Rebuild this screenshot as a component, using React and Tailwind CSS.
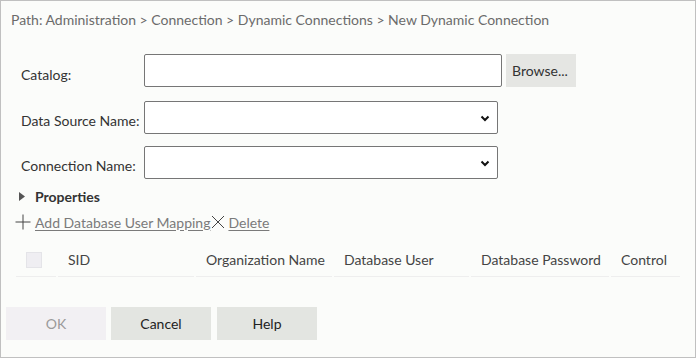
import React from "react";

const columns = [
  { title: "SID", width: "w-[136px]" },
  { title: "Organization Name", width: "w-[136px]" },
  { title: "Database User", width: "w-[135px]" },
  { title: "Database Password", width: "w-[138px]" },
  { title: "Control", width: "w-[69px]" },
];

const Chevron = () => (
  <svg width="10" height="7" viewBox="0 0 10 7" className="absolute right-[7px] top-[13px]">
    <path d="M1.5 1.5 L5 5 L8.5 1.5" fill="none" stroke="#111" strokeWidth="2" />
  </svg>
);

const SelectBox = () => (
  <div className="relative w-[354px] h-[33px] border border-[#767676] rounded-[2px] bg-white">
    <Chevron />
  </div>
);

const App = () => {
  return (
    <div
      className="w-[696px] h-[358px] border border-[#c0c0c0] bg-[#fbfcfa] text-[14px] text-[#333]"
      style={{ fontFamily: "Lato, 'Open Sans', sans-serif" }}
    >
      <div className="pl-[10px] pt-[10px] h-[17px] leading-[17px] text-[#6b6b6b] box-content">
        Path: Administration &gt; Connection &gt; Dynamic Connections &gt; New Dynamic Connection
      </div>

      <div className="mt-[26px] flex items-center">
        <div className="w-[143px] pl-[20px] pt-[7px]">Catalog:</div>
        <div className="w-[358px] h-[33px] border border-[#767676] rounded-[2px] bg-white" />
        <button className="ml-[4px] w-[70px] h-[33px] bg-[#e5e6e3] text-[#333] text-left pl-[6px]">
          Browse...
        </button>
      </div>

      <div className="mt-[14px] flex items-center">
        <div className="w-[143px] pl-[20px] pt-[5px]">Data Source Name:</div>
        <SelectBox />
      </div>

      <div className="mt-[12px] flex items-center">
        <div className="w-[143px] pl-[20px] pt-[5px]">Connection Name:</div>
        <SelectBox />
      </div>

      <div className="mt-[8px] h-[18px] flex items-center pl-[18px]">
        <svg width="6" height="9" viewBox="0 0 6 9">
          <path d="M0 0 L6 4.5 L0 9 Z" fill="#555" />
        </svg>
        <span className="ml-[10px] font-bold text-[#333]">Properties</span>
      </div>

      <div className="mt-[8px] h-[18px] flex items-center pl-[14px] text-[#7a7a7a]">
        <svg width="16" height="16" viewBox="0 0 16 16">
          <path d="M8 0.5 V15.5 M0.5 8 H15.5" stroke="#444" strokeWidth="1" />
        </svg>
        <span className="ml-[4px] underline underline-offset-2">Add Database User Mapping</span>
        <svg width="16" height="16" viewBox="0 0 16 16">
          <path d="M2 2 L14 14 M14 2 L2 14" stroke="#444" strokeWidth="1" />
        </svg>
        <span className="ml-[2px] underline underline-offset-2">Delete</span>
      </div>

      <div className="mt-[12px] ml-[15px] flex gap-[2px] text-[#444]">
        <div className="w-[40px] h-[34px] border-b border-[#eeeeee] flex items-center pl-[10px]">
          <div className="w-[16px] h-[16px] bg-[#efeef2] border border-[#e4e4e8]" />
        </div>
        {columns.map((col) => (
          <div
            key={col.title}
            className={`${col.width} h-[34px] border-b border-[#eeeeee] flex items-center pl-[10px] whitespace-nowrap`}
          >
            {col.title}
          </div>
        ))}
      </div>

      <div className="mt-[30px] ml-[5px] flex">
        <button className="w-[100px] h-[33px] bg-[#f2f0f3] text-[#9a9a9a]">OK</button>
        <button className="ml-[5px] w-[100px] h-[33px] bg-[#e3e5e1] text-[#222]">Cancel</button>
        <button className="ml-[6px] w-[100px] h-[33px] bg-[#e3e5e1] text-[#222]">Help</button>
      </div>
    </div>
  );
};

export default App;
